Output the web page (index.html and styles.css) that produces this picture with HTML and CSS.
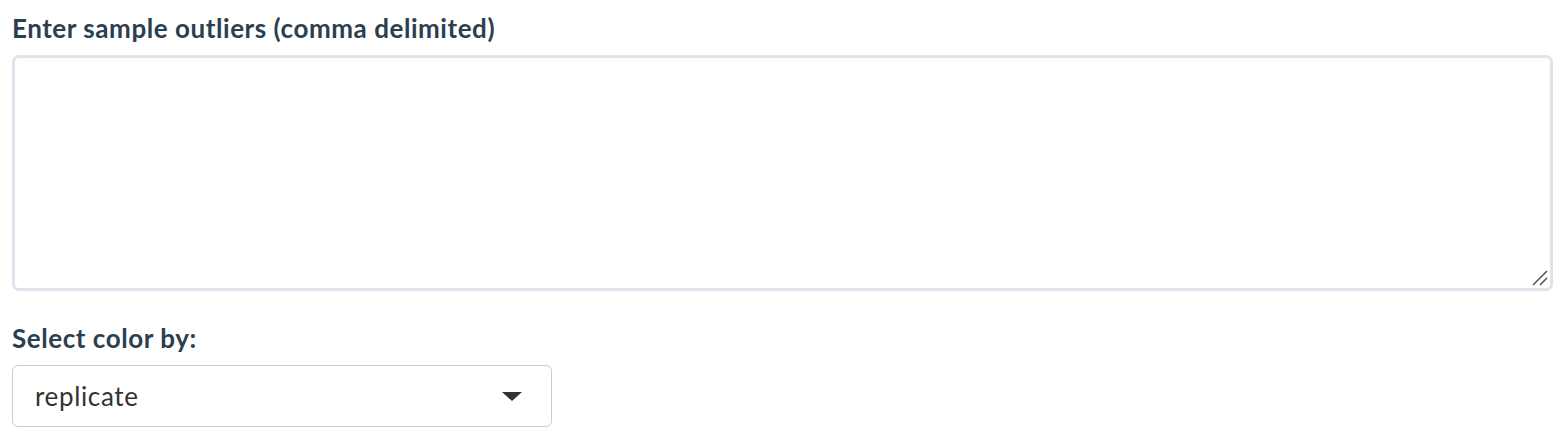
FILE: index.html
```html
<!DOCTYPE html>
<html>
  <head>
    <title>Sample outliers</title>
    <link rel="stylesheet" href="styles.css">
  </head>
  <body>
    <div class="form-group">
      <label class="control-label" for="outliers">Enter sample outliers (comma delimited)</label>
      <div class="textarea-wrap">
        <textarea id="outliers" class="form-control"></textarea>
        <!-- resize grip -->
        <svg class="grip" width="18" height="18" viewBox="0 0 18 18">
          <line x1="2" y1="16" x2="16" y2="2" stroke="#4a4a4a" stroke-width="1.4"/>
          <line x1="9" y1="16" x2="16" y2="9" stroke="#4a4a4a" stroke-width="1.4"/>
        </svg>
      </div>
    </div>

    <div class="form-group">
      <label class="control-label" for="color-by">Select color by:</label>
      <div class="select-box" id="color-by">
        <span class="select-value">replicate</span>
        <span class="caret"></span>
      </div>
    </div>
  </body>
</html>
```

FILE: styles.css
```css
body {
  margin: 0;
  padding: 0 8px 0 12px;
  font-family: Lato, "Noto Sans", sans-serif;
  color: #2c3e50;
  background: #ffffff;
}

.form-group {
  margin-bottom: 19px;
}

.control-label {
  display: block;
  font-weight: bold;
  font-size: 26px;
  letter-spacing: 0.55px;
  line-height: 32px;
  padding-top: 12px;
  margin-bottom: 11px;
  color: #2c3e50;
}

.textarea-wrap {
  position: relative;
  width: 1541px;
}

.form-control {
  display: block;
  box-sizing: border-box;
  width: 1541px;
  height: 236px;
  margin: 0;
  border: 3px solid #dee4ec;
  border-radius: 7px;
  font-family: Lato, sans-serif;
  font-size: 26px;
  resize: none;
  outline: none;
}

.grip {
  position: absolute;
  right: 4px;
  bottom: 4px;
}

.select-box {
  box-sizing: border-box;
  width: 540px;
  height: 62px;
  border: 1px solid #cccccc;
  border-radius: 6px;
  display: flex;
  align-items: center;
  justify-content: space-between;
  padding: 0 29px 0 22px;
}

.select-value {
  font-size: 26px;
  letter-spacing: 0.65px;
  color: #333333;
}

.caret {
  width: 0;
  height: 0;
  border-left: 10px solid transparent;
  border-right: 10px solid transparent;
  border-top: 9px solid #333333;
}
```
